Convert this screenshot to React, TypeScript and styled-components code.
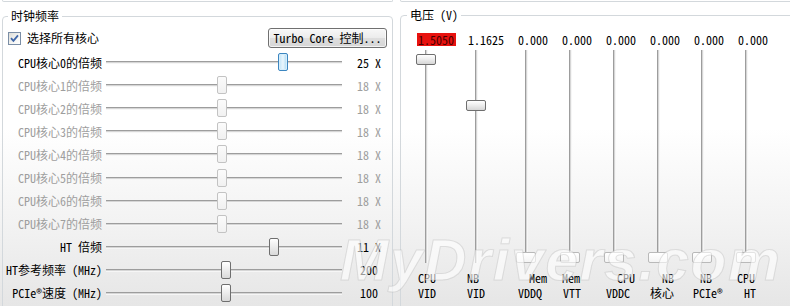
import React from "react";
import styled, { createGlobalStyle, css } from "styled-components";

const FONT = `"Noto Sans Mono CJK SC", "Liberation Mono", "Noto Sans CJK SC", monospace`;

const Global = createGlobalStyle`
  html, body { margin: 0; padding: 0; }
  body { font-family: ${FONT}; font-size: 12px; color: #000; }
`;

const Page = styled.div`
  position: relative;
  width: 790px;
  height: 306px;
  overflow: hidden;
  background: linear-gradient(to bottom, #ffffff 0%, #ffffff 42%, #f3f3f3 72%, #e6e6e6 100%);
  font-family: ${FONT};
  font-size: 12px;
`;

const TopStrip = styled.div`
  display: flex;
  gap: 7px;
  padding-left: 2px;
  height: 2px;
`;

const TopBox = styled.div<{ $w?: number }>`
  ${(p) => (p.$w ? `width: ${p.$w}px; flex: none;` : `flex: 1; margin-right: -10px;`)}
  box-sizing: border-box;
  height: 2px;
  border: 1px solid #d3d8dc;
  border-top: none;
  border-radius: 0 0 3px 3px;
`;

const Panels = styled.div`
  display: flex;
  gap: 7px;
  padding-left: 2px;
  align-items: flex-start;
`;

const Group = styled.fieldset<{ $w: number; $top: number }>`
  box-sizing: border-box;
  width: ${(p) => p.$w}px;
  flex: none;
  height: 330px;
  margin: ${(p) => p.$top}px 0 0 0;
  padding: 0;
  border: 1px solid #d3d8dc;
  border-radius: 4px;
  min-width: 0;
`;

const Legend = styled.legend<{ $ml: number }>`
  margin-left: ${(p) => p.$ml}px;
  padding: 0 3px;
  line-height: 14px;
  font-size: 12px;
  color: #000;
`;

/* ---------- left panel ---------- */

const Header = styled.div`
  display: flex;
  align-items: center;
  justify-content: space-between;
  height: 20px;
  margin-top: 5px;
  padding: 0 5px;
`;

const CheckLabel = styled.label`
  display: flex;
  align-items: center;
  gap: 6px;
  line-height: 14px;
`;

const CheckBox = styled.span`
  box-sizing: border-box;
  width: 13px;
  height: 13px;
  border: 1px solid #7b8ea6;
  background: linear-gradient(135deg, #dcdcd7 0%, #f6f6f4 60%, #ffffff 100%);
  display: flex;
  align-items: center;
  justify-content: center;
`;

const Button = styled.button`
  box-sizing: border-box;
  width: 119px;
  height: 20px;
  padding: 0;
  border: 1px solid #707070;
  border-radius: 3px;
  background: linear-gradient(to bottom, #f7f7f7 0%, #ececec 48%, #dedede 52%, #d6d6d6 100%);
  font-family: ${FONT};
  font-size: 12px;
  color: #000;
  line-height: 18px;
  box-shadow: inset 0 0 0 1px rgba(255, 255, 255, 0.7);
`;

const Rows = styled.div`
  margin-top: 3px;
  display: flex;
  flex-direction: column;
`;

const Row = styled.div`
  display: grid;
  grid-template-columns: 99px 236px 1fr;
  column-gap: 4px;
  align-items: center;
  height: 23.1px;
`;

const RowLabel = styled.span<{ $off?: boolean }>`
  text-align: right;
  white-space: nowrap;
  line-height: 14px;
  color: ${(p) => (p.$off ? "#9e9e9e" : "#000")};
`;

const HTrack = styled.div`
  position: relative;
  height: 3px;
  background: linear-gradient(to bottom, #9d9d9d 0 1px, #d6d6d6 1px 2px, #f6f6f6 2px 3px);
`;

const HThumb = styled.span<{ $kind: "focus" | "on" | "off" }>`
  position: absolute;
  top: -8px;
  width: 10px;
  height: 18px;
  box-sizing: border-box;
  border-radius: 2px;
  ${(p) =>
    p.$kind === "focus"
      ? css`
          border: 1px solid #3c86c0;
          background: linear-gradient(to right, #bfe3f7 0%, #eaf6fd 50%, #a8d8f2 100%);
          box-shadow: inset 0 0 0 1px #d6eefb;
        `
      : p.$kind === "on"
      ? css`
          border: 1px solid #6f6f6f;
          background: linear-gradient(to bottom, #ffffff 0%, #ececec 50%, #d9d9d9 100%);
        `
      : css`
          border: 1px solid #c3c3c3;
          background: linear-gradient(to bottom, #fbfbfb 0%, #f1f1f1 100%);
        `}
`;

const RowValue = styled.span<{ $off?: boolean }>`
  text-align: center;
  white-space: pre;
  line-height: 14px;
  color: ${(p) => (p.$off ? "#9e9e9e" : "#000")};
`;

/* ---------- right panel ---------- */

const Columns = styled.div`
  display: flex;
  padding-left: 16px;
  margin-top: 11px;
`;

const VCol = styled.div<{ $w: number }>`
  width: ${(p) => p.$w}px;
  flex: none;
  display: flex;
  flex-direction: column;
  align-items: flex-start;
`;

const VValue = styled.span<{ $alert?: boolean }>`
  height: 13px;
  line-height: 13px;
  padding: 0 1px;
  white-space: pre;
  ${(p) =>
    p.$alert &&
    css`
      background: #e8120f;
      color: #4a0000;
      padding-right: 2px;
    `}
`;

const VTrack = styled.div`
  position: relative;
  margin-top: 4px;
  margin-left: 8px;
  width: 3px;
  height: 213px;
  background: linear-gradient(to right, #9d9d9d 0 1px, #d6d6d6 1px 2px, #f6f6f6 2px 3px);
`;

const VThumb = styled.span<{ $dim?: boolean }>`
  position: absolute;
  left: -9px;
  width: 20px;
  height: 11px;
  box-sizing: border-box;
  border-radius: 2px;
  border: 1px solid ${(p) => (p.$dim ? "#b9b9b9" : "#6f6f6f")};
  background: ${(p) =>
    p.$dim
      ? "linear-gradient(to bottom, #ffffff 0%, #f4f4f4 100%)"
      : "linear-gradient(to bottom, #ffffff 0%, #ececec 50%, #d6d6d6 100%)"};
`;

const VCaption = styled.div`
  margin-top: 7px;
  display: flex;
  flex-direction: column;
  line-height: 15px;
  white-space: nowrap;
`;

const VCapLine = styled.span<{ $indent: number }>`
  padding-left: ${(p) => p.$indent}px;
`;

const Watermark = styled.div`
  position: absolute;
  left: 340px;
  top: 226px;
  font-family: "Liberation Sans", Arial, sans-serif;
  font-weight: bold;
  font-style: italic;
  font-size: 58px;
  letter-spacing: 2px;
  color: rgba(255, 255, 255, 0.6);
  -webkit-text-stroke: 1px rgba(175, 175, 175, 0.35);
  pointer-events: none;
  white-space: nowrap;
`;

type HRow = { label: string; pos: number; value: string; kind: "focus" | "on" | "off" };

const hRows: HRow[] = [
  { label: "CPU核心0的倍频", pos: 0.761, value: "25 X", kind: "focus" },
  ...[1, 2, 3, 4, 5, 6, 7].map((i) => ({
    label: `CPU核心${i}的倍频`,
    pos: 0.493,
    value: "18 X",
    kind: "off" as const,
  })),
  { label: "HT 倍频", pos: 0.723, value: "11 X", kind: "on" },
  { label: "HT参考频率 (MHz)", pos: 0.511, value: "200", kind: "on" },
  { label: "PCIe®速度 (MHz)", pos: 0.511, value: "100", kind: "on" },
];

type VColData = {
  w: number;
  value: string;
  alert?: boolean;
  pos: number;
  dim?: boolean;
  lines: [string, number][];
};

const vCols: VColData[] = [
  { w: 50, value: "1.5050", alert: true, pos: 0, lines: [["CPU", 1], ["VID", 1]] },
  { w: 50, value: "1.1625", pos: 0.23, lines: [["NB", 0], ["VID", 0]] },
  { w: 44, value: "0.000", pos: 1, dim: true, lines: [["Mem", 12], ["VDDQ", 1]] },
  { w: 44, value: "0.000", pos: 1, dim: true, lines: [["Mem", 1], ["VTT", 2]] },
  { w: 44, value: "0.000", pos: 1, dim: true, lines: [["CPU", 12], ["VDDC", 1]] },
  { w: 44, value: "0.000", pos: 1, dim: true, lines: [["NB", 13], ["核心", 1]] },
  { w: 44, value: "0.000", pos: 1, dim: true, lines: [["NB", 7], ["PCIe®", 0]] },
  { w: 44, value: "0.000", pos: 1, dim: true, lines: [["CPU", 0], ["HT", 7]] },
];

const Check = () => (
  <svg width="9" height="9" viewBox="0 0 9 9">
    <path d="M1 4.2 L3.4 6.8 L8 1.4" fill="none" stroke="#3f66a8" strokeWidth="1.8" />
  </svg>
);

export default function App() {
  return (
    <Page>
      <Global />
      <TopStrip>
        <TopBox $w={391} />
        <TopBox />
      </TopStrip>
      <Panels>
        <Group $w={391} $top={7}>
          <Legend $ml={5}>时钟频率</Legend>
          <Header>
            <CheckLabel>
              <CheckBox>
                <Check />
              </CheckBox>
              选择所有核心
            </CheckLabel>
            <Button>Turbo Core 控制...</Button>
          </Header>
          <Rows>
            {hRows.map((r, i) => (
              <Row key={i}>
                <RowLabel $off={r.kind === "off"}>{r.label}</RowLabel>
                <HTrack>
                  <HThumb $kind={r.kind} style={{ left: `${r.pos * 226}px` }} />
                </HTrack>
                <RowValue $off={r.kind === "off"}>{r.value}</RowValue>
              </Row>
            ))}
          </Rows>
        </Group>
        <Group $w={420} $top={6}>
          <Legend $ml={6}>电压 (V)</Legend>
          <Columns>
            {vCols.map((c, i) => (
              <VCol key={i} $w={c.w}>
                <VValue $alert={c.alert}>{c.value}</VValue>
                <VTrack>
                  <VThumb $dim={c.dim} style={{ top: `${4 + c.pos * 198}px` }} />
                </VTrack>
                <VCaption>
                  {c.lines.map(([t, ind], j) => (
                    <VCapLine key={j} $indent={ind}>
                      {t}
                    </VCapLine>
                  ))}
                </VCaption>
              </VCol>
            ))}
          </Columns>
        </Group>
      </Panels>
      <Watermark>MyDrivers.com</Watermark>
    </Page>
  );
}
